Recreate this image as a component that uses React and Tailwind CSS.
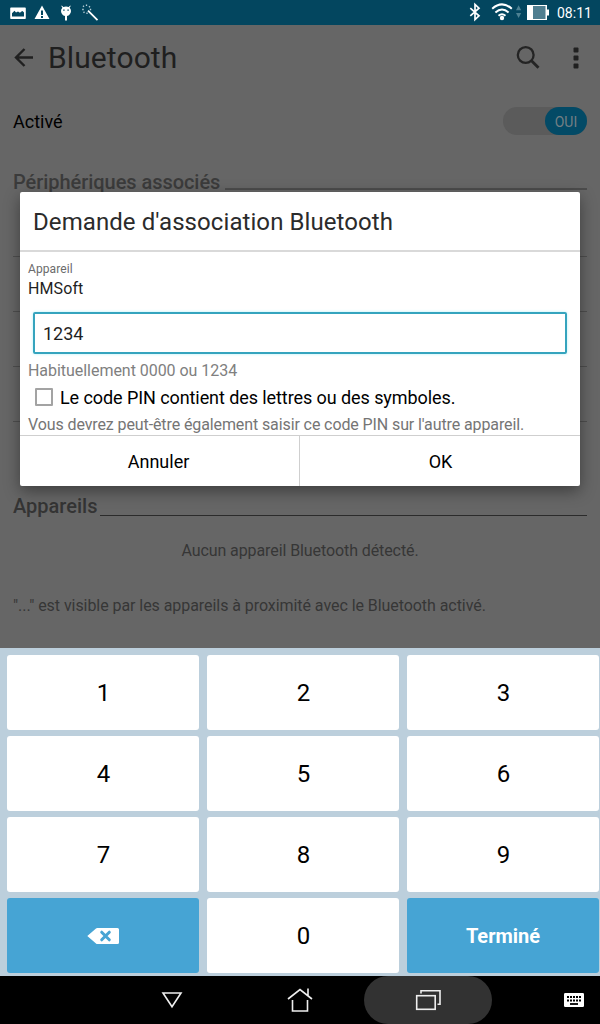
import React from 'react';
import clsx from 'clsx';

function StatusBar() {
  return (
    <div className="flex h-[25px] w-full items-center justify-between bg-[#03465f] text-white">
      <svg width="110" height="25" viewBox="0 0 110 25" fill="#fff">
        {/* picture */}
        <path
          fillRule="evenodd"
          d="M11 7.500h14a.8.8 0 0 1 .8.8v10a.8.8 0 0 1-.8.8H11a.8.8 0 0 1-.8-.8v-10a.8.8 0 0 1 .8-.8zM12 16.500h12v-4l-1.500-1.500-1.500.8-1 1-2-1.200-2 1-1.500-1.800-2.500 2.500z"
        />
        {/* warning */}
        <path
          fillRule="evenodd"
          d="M42 5.500 49.500 19h-15zM41 10.500v4.500h2v-4.500zm0 5.600v1.900h2v-1.900z"
        />
        {/* android head */}
        <path
          fillRule="evenodd"
          d="M61.800 5.500 63.300 7q2.700-.8 5.400 0l1.500-1.500.5.500-1.100 1.700q1.400 1.300 1.400 3.300c0 2.600-1.800 4.700-4 5V20.500h-2V16c-2.200-.3-4-2.400-4-5q0-2 1.400-3.300L61.300 6zM63.200 9.400v1.400h1.400V9.400zm4.200 0v1.400h1.400V9.400z"
        />
        {/* magic wand */}
        <path d="M88 10.600 97.500 20.200" stroke="#fff" strokeWidth="1.700" />
        <path
          d="M86.500 4.500v1.500M90 6.200l-1 1M91.200 9.500h-1.400M83 5.800l1 1M82.200 9.500h1.500M83.500 12.800l1-1M87 12.500V14"
          stroke="#b9d0d8"
          strokeWidth="1.300"
        />
      </svg>
      <div className="flex items-center">
        <svg width="97" height="25" viewBox="0 0 97 25" fill="none">
          {/* bluetooth */}
          <path
            d="M10.300 8.200 19 15.800l-4 3.700V4.500l4 3.700-8.700 7.600"
            stroke="#fff"
            strokeWidth="1.700"
          />
          {/* wifi */}
          <g stroke="#fff" strokeWidth="2">
            <path d="M32.200 8.700q9.800-8.600 19.600 0" />
            <path d="M35.400 12.400q6.600-5.800 13.200 0" />
            <path d="M38.500 15.800q3.500-3 7 0" />
          </g>
          <circle cx="42" cy="18" r="2.200" fill="#fff" />
          <path d="M56 10.300 58.600 5.300l2.600 5zM56 13l2.600 5 2.600-5z" fill="#4d8192" />
          {/* battery */}
          <rect x="67" y="5" width="20" height="15" fill="#fff" />
          <rect x="86" y="9.500" width="3" height="6" fill="#fff" />
          <rect x="73" y="6" width="12.500" height="13" fill="#4f7f91" />
        </svg>
        <span className="mr-2 w-[35px] pt-px text-[14px] leading-[24px] whitespace-nowrap">08:11</span>
      </div>
    </div>
  );
}

function Header() {
  return (
    <div className="flex h-[65px] items-center text-[#1f1f1f]">
      <svg className="ml-[13px]" width="24" height="24" viewBox="0 0 24 24" fill="none" stroke="#202020" strokeWidth="2.400">
        <path d="M20 11.500H3M11.500 3 3 11.500l8.500 8.500" />
      </svg>
      <h1 className="ml-[11px] text-[30px] leading-[36px] tracking-[0.1px]">Bluetooth</h1>
      <svg className="ml-auto" width="26" height="26" viewBox="0 0 26 26" fill="none" stroke="#242424">
        <circle cx="10.700" cy="10" r="7.900" strokeWidth="2.300" />
        <path d="m16 15.300 7.500 7.500" strokeWidth="2.800" />
      </svg>
      <svg className="mr-[20px] ml-[31px]" width="8" height="24" viewBox="0 0 8 24" fill="#202020">
        <rect x="1.500" y="1.500" width="5" height="5" rx="1" />
        <rect x="1.500" y="9.500" width="5" height="5" rx="1" />
        <rect x="1.500" y="17.500" width="5" height="5" rx="1" />
      </svg>
    </div>
  );
}

function Settings() {
  return (
    <div className="flex h-full flex-col bg-[#666]">
      <Header />
      <div className="flex h-[62px] items-center justify-between px-[13px]">
        <span className="text-[18px] text-black">Activé</span>
        <div className="flex h-7 w-[84px] justify-end rounded-full bg-[#5b5b5b]">
          <div className="flex h-7 w-[42px] items-center justify-center rounded-full bg-[#034a66] pt-[3px] text-[14px] text-[#737f84]">
            OUI
          </div>
        </div>
      </div>
      <div className="flex h-[38px] items-end gap-[5px] px-[13px]">
        <h2 className="text-[20px] leading-[16px] font-medium tracking-[-0.05px] whitespace-nowrap text-[#3b3b3b]">
          Périphériques associés
        </h2>
        <div className="h-[2px] flex-1 bg-[#4c4c4c]" />
      </div>
      {/* paired devices, mostly covered by the dialog */}
      <div className="mx-[13px] h-[67px] border-b border-[#4f4f4f]" />
      <div className="mx-[13px] h-[55px] border-b border-[#4f4f4f]" />
      <div className="mx-[13px] h-[55px] border-b border-[#4f4f4f]" />
      <div className="mx-[13px] h-[55px] border-b border-[#4f4f4f]" />
      <div className="flex h-[94px] items-end gap-[3px] px-[13px]">
        <h2 className="text-[20px] leading-[20px] font-medium whitespace-nowrap text-[#343434]">Appareils</h2>
        <div className="h-px flex-1 bg-[#2b2b2b]" />
      </div>
      <p className="flex h-[68px] items-center justify-center pt-[2px] text-[16px] tracking-[-0.09px] text-[#363636]">
        Aucun appareil Bluetooth détecté.
      </p>
      <p className="px-[13px] pt-[10px] text-[16px] leading-6 tracking-[-0.06px] text-[#363636]">
        "..." est visible par les appareils à proximité avec le Bluetooth activé.
      </p>
    </div>
  );
}

function PairingDialog() {
  return (
    <div className="absolute top-[167px] left-5 flex h-[294px] w-[560px] flex-col rounded-[2px] bg-white shadow-[0_5px_16px_rgba(0,0,0,0.4)]">
      <h2 className="flex h-[60px] items-center border-b-2 border-[#d9d9d9] px-[13px] pt-[2px] text-[24px] tracking-[0.08px] text-[#2b2b2b]">
        Demande d'association Bluetooth
      </h2>
      <div className="flex h-[183px] flex-col px-2">
        <span className="mt-[9px] text-[12px] leading-[16px] tracking-[0.08px] text-[#6b6b6b]">Appareil</span>
        <span className="mt-px text-[16px] leading-[22px] tracking-[0.1px] text-[#1f1f1f]">HMSoft</span>
        <div className="mt-3 mr-[5px] ml-[5px] flex h-[42px] shrink-0 items-center rounded-[2px] border-2 border-[#35a4be] pl-2 text-[18px] text-[#1f1f1f] shadow-[0_0_3px_rgba(60,220,240,0.4)]">
          1234
        </div>
        <span className="mt-[5px] text-[16px] leading-[24px] tracking-[-0.04px] text-[#808080]">
          Habituellement 0000 ou 1234
        </span>
        <label className="flex h-[28px] shrink-0 items-center gap-[7px] pl-[7px] text-[18px] tracking-[-0.08px] whitespace-nowrap text-black">
          <span className="h-[18px] w-[18px] rounded-[1px] border-2 border-[#a3a3a3]" />
          Le code PIN contient des lettres ou des symboles.
        </label>
        <span className="mt-[3px] text-[16px] leading-[22px] tracking-[-0.105px] whitespace-nowrap text-[#757575]">
          Vous devrez peut-être également saisir ce code PIN sur l'autre appareil.
        </span>
      </div>
      <div className="flex flex-1 border-t border-[#cfcfcf] text-[18px] text-black">
        <button className="w-[280px] border-r border-[#cfcfcf] pt-px pr-[2px]">Annuler</button>
        <button className="flex-1 pt-px pl-px">OK</button>
      </div>
    </div>
  );
}

const KEYS = ['1', '2', '3', '4', '5', '6', '7', '8', '9', 'del', '0', 'Terminé'];

function Key({ value }) {
  const action = value === 'del' || value === 'Terminé';
  return (
    <button
      className={clsx(
        'flex h-[75px] w-48 items-center justify-center rounded-[3px]',
        action ? 'bg-[#46a4d4] text-[20px] font-bold text-white' : 'bg-white pt-px pl-px text-[24px] text-black'
      )}
    >
      {value === 'del' ? (
        <svg width="32" height="16" viewBox="0 0 32 16">
          <path d="M.3 8 9 .5Q9.500 0 10.200 0H30.500Q32 0 32 1.500v13Q32 16 30.500 16H10.200Q9.500 16 9 15.500z" fill="#fff" />
          <path d="m14.700 4.200 7.600 7.600m0-7.600-7.600 7.600" stroke="#46a4d4" strokeWidth="3" strokeLinecap="round" />
        </svg>
      ) : (
        value
      )}
    </button>
  );
}

function Keypad() {
  return (
    <div className="grid h-[328px] grid-cols-[192px_192px_192px] content-start gap-x-2 gap-y-[6px] bg-[#bccfdc] pt-[7px] pl-[7px]">
      {KEYS.map((k) => (
        <Key key={k} value={k} />
      ))}
    </div>
  );
}

function NavBar() {
  return (
    <div className="flex h-12 items-center bg-black">
      <button className="ml-[108px] flex h-12 w-32 items-center justify-center">
        <svg width="22" height="18" viewBox="0 0 22 18" fill="none" stroke="#eee" strokeWidth="1.600">
          <path d="M2 2h18l-9 13.700z" />
        </svg>
      </button>
      <button className="flex h-12 w-32 items-center justify-center">
        <svg width="26" height="26" viewBox="0 0 26 26" fill="none" stroke="#eee" strokeWidth="1.600">
          <path d="M1 12 13 2.500 25 12M5.500 13V24h15V13M21 9V1.500" />
        </svg>
      </button>
      <button className="flex h-12 w-32 items-center justify-center rounded-full bg-[#323232]">
        <svg width="26" height="22" viewBox="0 0 26 22" fill="none" stroke="#eee" strokeWidth="1.600">
          <rect x="1.700" y="6.700" width="18.500" height="13.600" />
          <path d="M6 4.500V1.700H25V15.200h-2.500" />
        </svg>
      </button>
      <svg className="ml-[72px]" width="20" height="14" viewBox="0 0 20 14" fill="#fff">
        <rect width="20" height="14" rx="1.200" />
        <path
          d="M3 4h14M3 7.500h14"
          stroke="#000"
          strokeWidth="2"
          strokeDasharray="2 1"
        />
        <path d="M6 11h8" stroke="#000" strokeWidth="1.800" />
      </svg>
    </div>
  );
}

function App() {
  return (
    <div className="flex h-[1024px] w-[600px] flex-col overflow-hidden font-['Roboto',sans-serif]">
      <StatusBar />
      <div className="relative h-[623px]">
        <Settings />
        <PairingDialog />
      </div>
      <Keypad />
      <NavBar />
    </div>
  );
}

export default App;
